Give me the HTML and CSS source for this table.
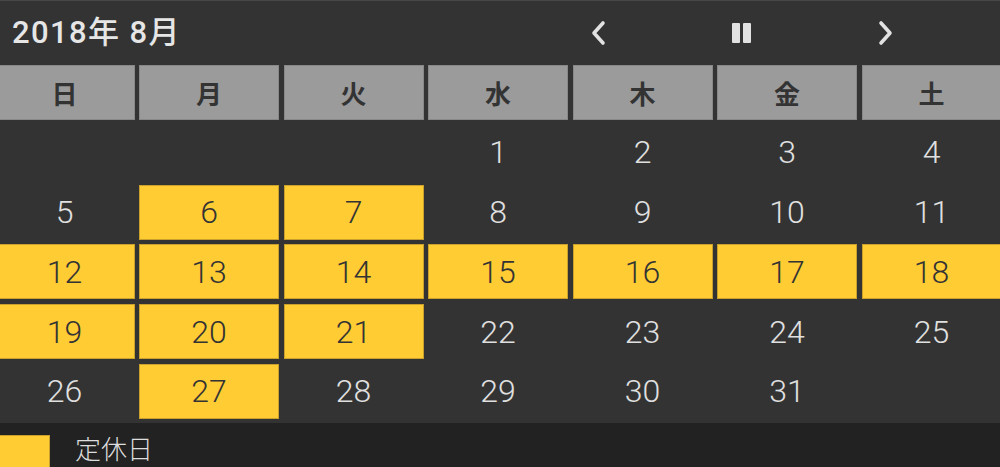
FILE: index.html
```html
<!DOCTYPE html>
<html lang="ja">
<head>
    <meta charset="UTF-8">
    <meta name="viewport" content="width=device-width, initial-scale=1.0">
    <title>営業カレンダー</title>
    <link rel="stylesheet" href="styles.css">
</head>
<body>
    <div class="calendar">
        <!-- Month header -->
        <div class="cal-head">
            <h2 class="cal-title">2018年 8月</h2>
            <div class="cal-nav">
                <button class="nav-btn" aria-label="前の月">
                    <svg width="18" height="26" viewBox="0 0 18 26"><polyline points="14,3 5,13 14,23" fill="none" stroke="#e2e2e2" stroke-width="3.6" stroke-linecap="round" stroke-linejoin="round"/></svg>
                </button>
                <button class="nav-btn" aria-label="一時停止">
                    <svg width="22" height="22" viewBox="0 0 22 22"><rect x="1" y="1" width="8" height="20" rx="1" fill="#e2e2e2"/><rect x="12" y="1" width="8" height="20" rx="1" fill="#e2e2e2"/></svg>
                </button>
                <button class="nav-btn" aria-label="次の月">
                    <svg width="18" height="26" viewBox="0 0 18 26"><polyline points="4,3 13,13 4,23" fill="none" stroke="#e2e2e2" stroke-width="3.6" stroke-linecap="round" stroke-linejoin="round"/></svg>
                </button>
            </div>
        </div>

        <!-- Days -->
        <div class="cal-grid">
            <div class="wday">日</div>
            <div class="wday">月</div>
            <div class="wday">火</div>
            <div class="wday">水</div>
            <div class="wday">木</div>
            <div class="wday">金</div>
            <div class="wday">土</div>

            <div class="day"></div>
            <div class="day"></div>
            <div class="day"></div>
            <div class="day">1</div>
            <div class="day">2</div>
            <div class="day">3</div>
            <div class="day">4</div>

            <div class="day">5</div>
            <div class="day closed">6</div>
            <div class="day closed">7</div>
            <div class="day">8</div>
            <div class="day">9</div>
            <div class="day">10</div>
            <div class="day">11</div>

            <div class="day closed">12</div>
            <div class="day closed">13</div>
            <div class="day closed">14</div>
            <div class="day closed">15</div>
            <div class="day closed">16</div>
            <div class="day closed">17</div>
            <div class="day closed">18</div>

            <div class="day closed">19</div>
            <div class="day closed">20</div>
            <div class="day closed">21</div>
            <div class="day">22</div>
            <div class="day">23</div>
            <div class="day">24</div>
            <div class="day">25</div>

            <div class="day">26</div>
            <div class="day closed">27</div>
            <div class="day">28</div>
            <div class="day">29</div>
            <div class="day">30</div>
            <div class="day">31</div>
            <div class="day"></div>
        </div>

        <!-- Legend -->
        <div class="legend">
            <span class="legend-box"></span>
            <span class="legend-label">定休日</span>
        </div>
    </div>
</body>
</html>
```

FILE: styles.css
```css
body {
    margin: 0;
    font-family: Roboto, "Noto Sans CJK JP", sans-serif;
    background-color: #333333;
    overflow: hidden;
}

.calendar {
    width: 1000px;
    height: 467px;
    overflow: hidden;
    border-top: 1px solid #474747;
    box-sizing: border-box;
}

.cal-head {
    height: 64px;
    display: flex;
    align-items: center;
}

.cal-title {
    flex: 1;
    margin: 0;
    padding-left: 12px;
    padding-bottom: 2px;
    font-size: 31px;
    font-weight: 500;
    letter-spacing: 1.4px;
    line-height: 1;
    color: #e6e6e6;
}

.cal-nav {
    display: flex;
    padding-right: 42px;
}

.nav-btn {
    width: 144px;
    height: 40px;
    display: flex;
    align-items: center;
    justify-content: center;
    padding: 0;
    background: none;
    border: none;
    cursor: pointer;
}

.cal-grid {
    display: grid;
    grid-template-columns: repeat(7, 140px);
    grid-auto-rows: 55px;
    column-gap: 4.5px;
    row-gap: 4.8px;
    margin-left: -5.5px;
}

.wday, .day {
    display: flex;
    align-items: center;
    justify-content: center;
    box-sizing: border-box;
    line-height: 1;
}

.wday {
    background-color: #9b9b9b;
    border: 1px solid #888888;
    color: #333333;
    font-family: "Noto Sans CJK JP", sans-serif;
    font-size: 26px;
    font-weight: bold;
}

.day {
    color: #e0e0e0;
    font-size: 32px;
    font-weight: 300;
}

.day.closed {
    background-color: #ffcc33;
    border: 1px solid #c9a02c;
    color: #333333;
}

.legend {
    margin-top: 4px;
    height: 44px;
    background-color: #222222;
    display: flex;
    align-items: flex-start;
    gap: 25px;
}

.legend-box {
    width: 50px;
    height: 32px;
    margin-top: 12px;
    box-sizing: border-box;
    background-color: #ffcc33;
    border: 1px solid #c9a02c;
    border-left: none;
    border-bottom: none;
}

.legend-label {
    font-family: "Noto Sans CJK JP", sans-serif;
    font-size: 26px;
    font-weight: 300;
    color: #dddddd;
    line-height: 1;
    margin-top: 12px;
}
```
